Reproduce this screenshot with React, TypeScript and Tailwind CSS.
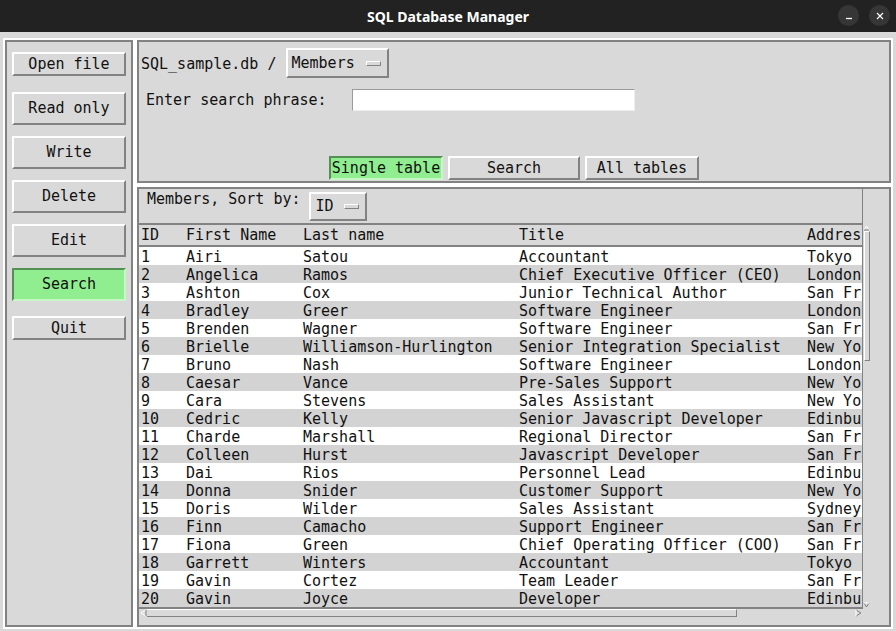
import React from "react";

const raised =
  "border-2 border-t-white border-l-white border-r-[#828282] border-b-[#828282] bg-[#d9d9d9]";
const sunkenGreen =
  "border-2 border-t-[#568f56] border-l-[#568f56] border-r-[#c7f7c7] border-b-[#c7f7c7] bg-[#90ee90]";

function Frame({ className = "", inner = "", children }: { className?: string; inner?: string; children?: React.ReactNode }) {
  return (
    <div className={`border-2 border-white ${className}`}>
      <div className={`border-2 border-[#828282] h-full ${inner}`}>{children}</div>
    </div>
  );
}

function Btn({ label, green = false, className = "" }: { label: string; green?: boolean; className?: string }) {
  return (
    <div className={`${green ? sunkenGreen : raised} flex items-center justify-center text-[#111] ${className}`}>
      {label}
    </div>
  );
}

function OptionMenu({ label, className = "" }: { label: string; className?: string }) {
  return (
    <div className={`${raised} flex items-center pl-[4px] pr-[6px] ${className}`}>
      <span className="flex-1">{label}</span>
      <span className="w-[15px] h-[5px] border border-t-white border-l-white border-r-[#828282] border-b-[#828282] bg-[#d9d9d9]" />
    </div>
  );
}

const rows: [string, string, string, string, string][] = [
  ["1", "Airi", "Satou", "Accountant", "Tokyo"],
  ["2", "Angelica", "Ramos", "Chief Executive Officer (CEO)", "London"],
  ["3", "Ashton", "Cox", "Junior Technical Author", "San Francisco"],
  ["4", "Bradley", "Greer", "Software Engineer", "London"],
  ["5", "Brenden", "Wagner", "Software Engineer", "San Francisco"],
  ["6", "Brielle", "Williamson-Hurlington", "Senior Integration Specialist", "New York"],
  ["7", "Bruno", "Nash", "Software Engineer", "London"],
  ["8", "Caesar", "Vance", "Pre-Sales Support", "New York"],
  ["9", "Cara", "Stevens", "Sales Assistant", "New York"],
  ["10", "Cedric", "Kelly", "Senior Javascript Developer", "Edinburgh"],
  ["11", "Charde", "Marshall", "Regional Director", "San Francisco"],
  ["12", "Colleen", "Hurst", "Javascript Developer", "San Francisco"],
  ["13", "Dai", "Rios", "Personnel Lead", "Edinburgh"],
  ["14", "Donna", "Snider", "Customer Support", "New York"],
  ["15", "Doris", "Wilder", "Sales Assistant", "Sydney"],
  ["16", "Finn", "Camacho", "Support Engineer", "San Francisco"],
  ["17", "Fiona", "Green", "Chief Operating Officer (COO)", "San Francisco"],
  ["18", "Garrett", "Winters", "Accountant", "Tokyo"],
  ["19", "Gavin", "Cortez", "Team Leader", "San Francisco"],
  ["20", "Gavin", "Joyce", "Developer", "Edinburgh"],
];

const cols = "grid grid-cols-[45px_117px_216px_288px_1fr] pl-[2px] whitespace-nowrap overflow-hidden";

export default function App() {
  return (
    <div className="w-[896px] h-[631px] bg-[#d9d9d9] flex flex-col overflow-hidden font-['DejaVu_Sans_Mono',monospace] text-[15px] text-[#111]">
      {/* Title bar */}
      <div className="h-[32px] bg-[#222222] flex items-center relative shrink-0">
        <div className="flex-1 text-center text-white font-['Noto_Sans',sans-serif] font-bold text-[14px]">
          SQL Database Manager
        </div>
        <div className="absolute right-[6px] top-[5px] flex gap-[10px]">
          <div className="w-[21px] h-[21px] rounded-full bg-[#363636] flex items-center justify-center">
            <svg width="10" height="10" viewBox="0 0 10 10">
              <line x1="2" y1="7.5" x2="8" y2="7.5" stroke="white" strokeWidth="1.3" />
            </svg>
          </div>
          <div className="w-[21px] h-[21px] rounded-full bg-[#363636] flex items-center justify-center">
            <svg width="10" height="10" viewBox="0 0 10 10">
              <path d="M2 2 L8 8 M8 2 L2 8" stroke="white" strokeWidth="1.2" />
            </svg>
          </div>
        </div>
      </div>

      {/* Body */}
      <div className="flex-1 flex pt-[6px] pb-[2px] pl-[3px] pr-[3px]">
        {/* Left frame */}
        <Frame className="w-[132px]" inner="flex flex-col px-[5px] pt-[10px]">
          <Btn label="Open file" className="h-[24px]" />
          <Btn label="Read only" className="h-[33px] mt-[16px]" />
          <Btn label="Write" className="h-[33px] mt-[11px]" />
          <Btn label="Delete" className="h-[33px] mt-[11px]" />
          <Btn label="Edit" className="h-[33px] mt-[11px]" />
          <Btn label="Search" green className="h-[33px] mt-[11px]" />
          <Btn label="Quit" className="h-[24px] mt-[15px]" />
        </Frame>

        {/* Right column */}
        <div className="flex-1 flex flex-col">
          {/* Top frame */}
          <Frame className="h-[147px]" inner="flex flex-col">
            <div className="flex items-center mt-[6px] pl-[2px]">
              <span className="whitespace-pre leading-[24px] pt-[1px]">SQL_sample.db / </span>
              <OptionMenu label="Members" className="w-[103px] h-[30px]" />
            </div>
            <div className="flex items-center mt-[11px] pl-[7px]">
              <span className="whitespace-pre">Enter search phrase:</span>
              <div className="ml-[25px] w-[283px] h-[22px] bg-white border border-t-[#9a9a9a] border-l-[#9a9a9a] border-r-[#eeeeee] border-b-[#eeeeee]" />
            </div>
            <div className="mt-auto mb-[1px] flex justify-center gap-[5px]">
              <Btn label="Single table" green className="w-[114px] h-[24px]" />
              <Btn label="Search" className="w-[132px] h-[24px]" />
              <Btn label="All tables" className="w-[114px] h-[24px]" />
            </div>
          </Frame>

          {/* Bottom frame */}
          <Frame className="flex-1" inner="flex">
            <div className="w-[724px] flex flex-col">
              <div className="h-[34px] border-r border-[#828282] flex items-start pl-[8px] pt-[3px]">
                <span className="mt-[-2px] leading-[18px] whitespace-pre">Members, Sort by:</span>
                <OptionMenu label="ID" className="ml-[8px] w-[58px] h-[29px] pl-[5px]" />
              </div>
              <div className="border-t-2 border-b-2 border-r border-[#828282] flex flex-col">
                <div className={`${cols} h-[22px] pt-[1px] leading-[18px] border-b-2 border-[#828282] bg-[#d9d9d9]`}>
                  <span>ID</span>
                  <span>First Name</span>
                  <span>Last name</span>
                  <span>Title</span>
                  <span className="overflow-hidden">Address</span>
                </div>
                <div className="h-[360px] overflow-hidden">
                  {rows.map((r, i) => (
                    <div
                      key={r[0]}
                      className={`${cols} h-[18px] leading-[20px] ${i % 2 === 0 ? "bg-white" : "bg-[#d3d3d3]"}`}
                    >
                      {r.map((c, j) => (
                        <span key={j} className="overflow-hidden">
                          {c}
                        </span>
                      ))}
                    </div>
                  ))}
                </div>
              </div>
              {/* Horizontal scrollbar */}
              <div className="h-[8px] flex items-stretch">
                <svg width="7" height="8" viewBox="0 0 7 8" className="shrink-0 ml-[1px]">
                  <path d="M6 1 L1 4 L6 7" fill="none" stroke="#ffffff" strokeWidth="1" />
                  <path d="M6 1 L6 7" stroke="#828282" strokeWidth="1" />
                </svg>
                <div className="w-[590px] border-t border-t-white border-b border-b-[#828282] border-r border-r-[#828282]" />
                <div className="flex-1" />
                <svg width="7" height="8" viewBox="0 0 7 8" className="shrink-0 mr-[1px]">
                  <path d="M1 1 L6 4 L1 7" fill="none" stroke="#828282" strokeWidth="1" />
                  <path d="M1 1 L1 7" stroke="#ffffff" strokeWidth="1" />
                </svg>
              </div>
            </div>
            {/* Vertical scrollbar */}
            <div className="w-[7px] mt-[36px] h-[385px] flex flex-col">
              <svg width="7" height="6" viewBox="0 0 7 6" className="shrink-0">
                <path d="M1 5 L3.5 1 L6 5" fill="none" stroke="#ffffff" strokeWidth="1" />
                <path d="M1 5 L6 5" stroke="#828282" strokeWidth="1" />
              </svg>
              <div className="h-[130px] border-l border-l-white border-t border-t-white border-r border-r-[#828282] border-b border-b-[#828282] ml-[1px] w-[6px]" />
              <div className="flex-1" />
              <svg width="7" height="6" viewBox="0 0 7 6" className="shrink-0 mb-[2px]">
                <path d="M1 1 L3.5 5 L6 1" fill="none" stroke="#828282" strokeWidth="1" />
                <path d="M1 1 L6 1" stroke="#ffffff" strokeWidth="1" />
              </svg>
            </div>
          </Frame>
        </div>
      </div>
    </div>
  );
}
